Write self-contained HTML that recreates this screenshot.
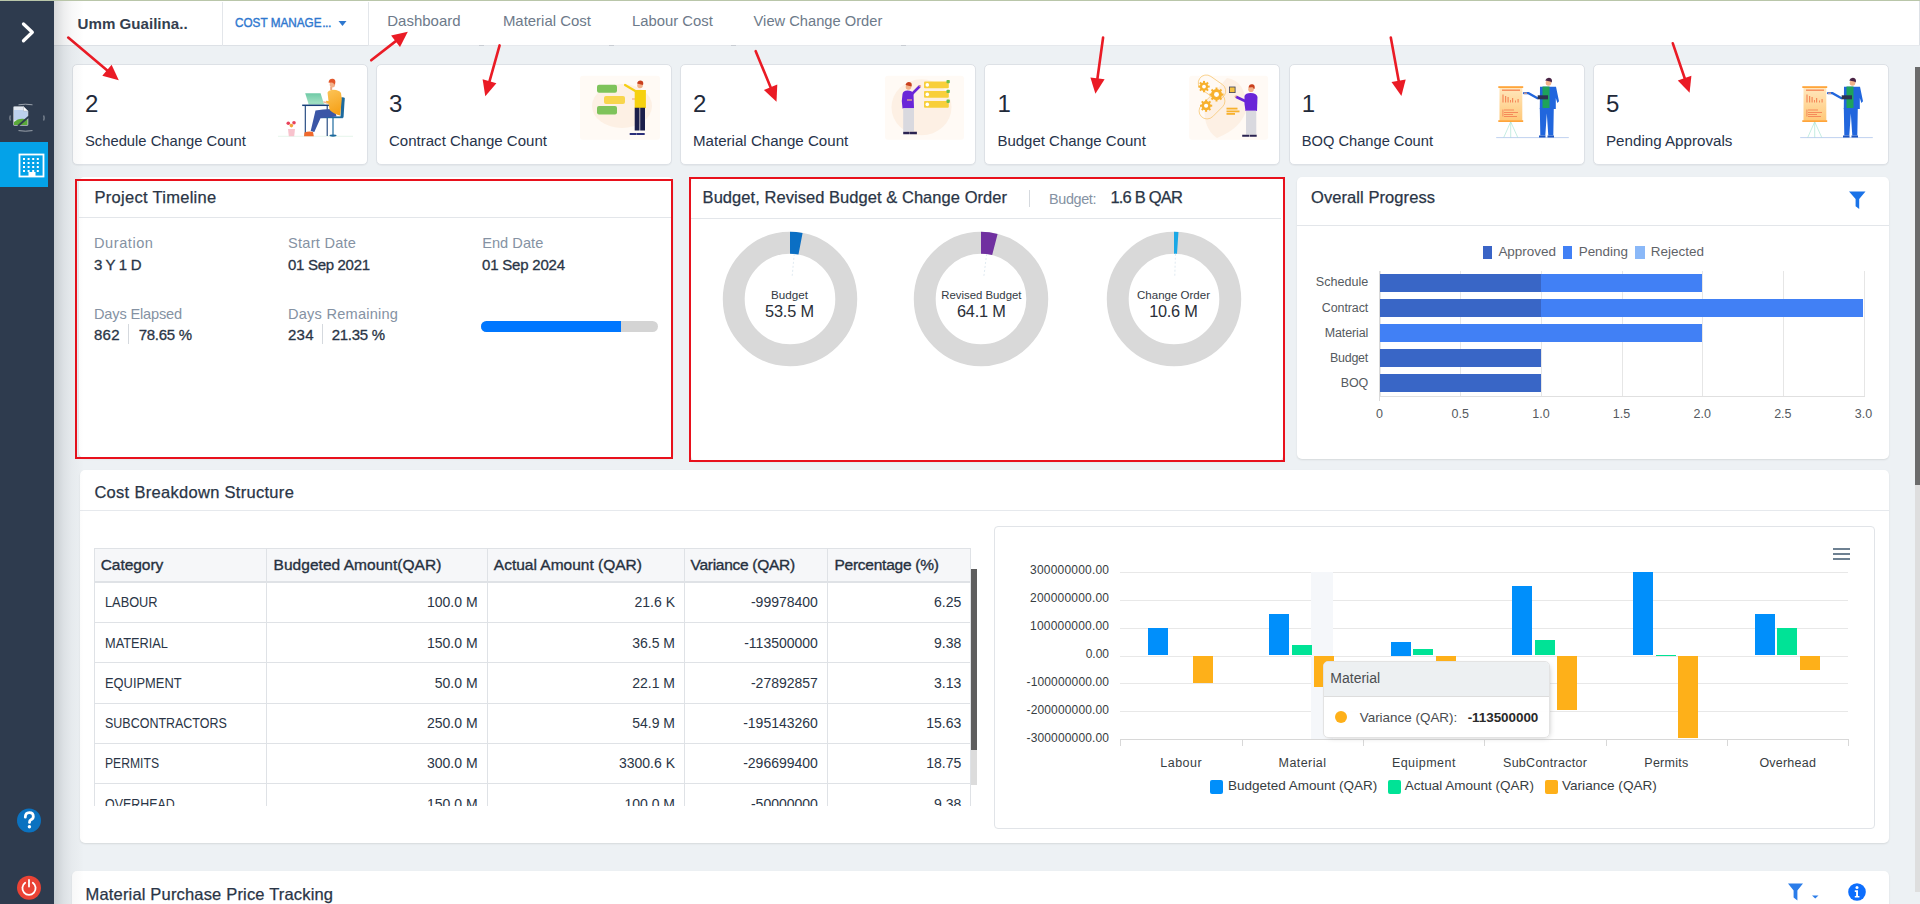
<!DOCTYPE html>
<html><head><meta charset="utf-8">
<style>
*{box-sizing:border-box;margin:0;padding:0}
html,body{width:1920px;height:904px;overflow:hidden}
body{font-family:"Liberation Sans",sans-serif;background:#edf1f4;color:#2a3546;position:relative}
.a{position:absolute}
.t{position:absolute;white-space:nowrap;line-height:1}
svg{position:absolute;overflow:visible}
</style></head><body>
<div class="a" style="left:54px;top:1px;width:1866px;height:45px;background:#fff;"></div>
<div class="a" style="left:54px;top:45px;width:314px;height:1px;background:#dde1e6;"></div>
<div class="a" style="left:368px;top:45px;width:1552px;height:1px;background:#e6e9ed;"></div>
<div class="a" style="left:222px;top:2px;width:1px;height:44px;background:#e3e6ea;"></div>
<div class="a" style="left:368px;top:2px;width:1px;height:44px;background:#e3e6ea;"></div>
<div class="a" style="left:479px;top:45px;width:5px;height:1px;background:#c9cdd3;"></div>
<div class="a" style="left:609px;top:45px;width:5px;height:1px;background:#c9cdd3;"></div>
<div class="a" style="left:731px;top:45px;width:5px;height:1px;background:#c9cdd3;"></div>
<div class="a" style="left:901px;top:45px;width:5px;height:1px;background:#c9cdd3;"></div>
<div class="a" style="left:72px;top:64px;width:296px;height:101px;background:#fff;border:1px solid #dde1e6;border-radius:5px;box-shadow:0 1px 1px rgba(0,0,0,0.04)"></div>
<div class="a" style="left:376px;top:64px;width:296px;height:101px;background:#fff;border:1px solid #dde1e6;border-radius:5px;box-shadow:0 1px 1px rgba(0,0,0,0.04)"></div>
<div class="a" style="left:680px;top:64px;width:296px;height:101px;background:#fff;border:1px solid #dde1e6;border-radius:5px;box-shadow:0 1px 1px rgba(0,0,0,0.04)"></div>
<div class="a" style="left:984.4px;top:64px;width:296px;height:101px;background:#fff;border:1px solid #dde1e6;border-radius:5px;box-shadow:0 1px 1px rgba(0,0,0,0.04)"></div>
<div class="a" style="left:1288.8px;top:64px;width:296px;height:101px;background:#fff;border:1px solid #dde1e6;border-radius:5px;box-shadow:0 1px 1px rgba(0,0,0,0.04)"></div>
<div class="a" style="left:1593px;top:64px;width:296px;height:101px;background:#fff;border:1px solid #dde1e6;border-radius:5px;box-shadow:0 1px 1px rgba(0,0,0,0.04)"></div>
<div class="a" style="left:79px;top:177px;width:594px;height:281px;background:#fff;border-radius:5px;box-shadow:0 1px 2px rgba(0,0,0,0.10);"></div>
<div class="a" style="left:691px;top:177px;width:592px;height:284px;background:#fff;border-radius:5px;box-shadow:0 1px 2px rgba(0,0,0,0.10);"></div>
<div class="a" style="left:1297px;top:177px;width:592px;height:282px;background:#fff;border-radius:5px;box-shadow:0 1px 2px rgba(0,0,0,0.10);"></div>
<div class="a" style="left:79px;top:217px;width:592px;height:1px;background:#e3e6ea;"></div>
<div class="a" style="left:691px;top:218px;width:590px;height:1px;background:#e3e6ea;"></div>
<div class="a" style="left:1297px;top:225px;width:592px;height:1px;background:#e3e6ea;"></div>
<div class="a" style="left:80px;top:470px;width:1809px;height:373px;background:#fff;border-radius:5px;box-shadow:0 1px 2px rgba(0,0,0,0.10);"></div>
<div class="a" style="left:80px;top:510px;width:1809px;height:1px;background:#e6e9ed;"></div>
<div class="a" style="left:994px;top:526px;width:881px;height:303px;border:1px solid #e1e4e8;border-radius:4px;background:#fff"></div>
<div class="a" style="left:72px;top:871px;width:1817px;height:60px;background:#fff;border-radius:5px;box-shadow:0 1px 2px rgba(0,0,0,0.10);"></div>
<div class="a" style="left:0px;top:0px;width:54px;height:904px;background:#2e3b4e;"></div>
<div class="a" style="left:0px;top:0px;width:1920px;height:1px;background:#b9c6a9;"></div>
<svg style="left:0;top:0" width="54" height="60"><polyline points="23.5,24 32.3,32.3 23.5,40.8" fill="none" stroke="#fff" stroke-width="3.3" stroke-linecap="round" stroke-linejoin="round"/></svg>
<svg style="left:8px;top:101px" width="40" height="34">
<g stroke="#c9ced4" stroke-width="0.7" fill="none">
<path d="M10.5,3.8 q7,-1.2 14,0"/><path d="M10.5,29.6 q7,1.2 14,0"/><path d="M2.2,19.5 q-0.6,-2.5 0,-5"/><path d="M35.8,14.5 q0.6,2.5 0,5"/>
</g>
<path d="M5.5,6.5 q0,-1 1,-1 h9 l4.5,4.5 v13.5 q0,1 -1,1 h-12.5 q-1,0 -1,-1z" fill="#e3e9f2" stroke="#a7adb5" stroke-width="0.7"/>
<path d="M6,9 h13.5 v10 h-13.5z" fill="#bcd0ec"/>
<path d="M6,24 v-3 q5,-5 13.5,-2.5 v5.5z" fill="#5aa83a"/>
<path d="M15.5,5.5 v4.5 h4.5z" fill="#fff" stroke="#a7adb5" stroke-width="0.5"/>
<path d="M10,25 l11,-9.5" stroke="#2e3b4e" stroke-width="1.8"/>
</svg>
<div class="a" style="left:0px;top:142px;width:48px;height:45px;background:#04a2e8;"></div>
<svg style="left:17px;top:152px" width="30" height="28">
<rect x="2.5" y="2.5" width="24" height="22" fill="none" stroke="#fff" stroke-width="1.8"/>
<g fill="#fff"><rect x="6.0" y="6.0" width="2" height="2"/><rect x="6.0" y="10.0" width="2" height="2"/><rect x="6.0" y="14.0" width="2" height="2"/><rect x="6.0" y="18.0" width="2" height="2"/><rect x="10.6" y="6.0" width="2" height="2"/><rect x="10.6" y="10.0" width="2" height="2"/><rect x="10.6" y="14.0" width="2" height="2"/><rect x="10.6" y="18.0" width="2" height="2"/><rect x="15.2" y="6.0" width="2" height="2"/><rect x="15.2" y="10.0" width="2" height="2"/><rect x="15.2" y="14.0" width="2" height="2"/><rect x="15.2" y="18.0" width="2" height="2"/><rect x="19.8" y="6.0" width="2" height="2"/><rect x="19.8" y="10.0" width="2" height="2"/><rect x="19.8" y="14.0" width="2" height="2"/><rect x="19.8" y="18.0" width="2" height="2"/>
<rect x="11.5" y="20" width="7" height="5"/></g></svg>
<svg style="left:15px;top:806px" width="30" height="30"><circle cx="14" cy="14.5" r="12" fill="#0b72c0"/>
<path d="M10.3,11.2 q0,-4.6 4,-4.6 q4,0 4,3.8 q0,2.3 -2.4,3.4 q-1.4,0.7 -1.4,2.6" fill="none" stroke="#fff" stroke-width="2.8" stroke-linecap="round"/>
<circle cx="14.4" cy="20.8" r="1.7" fill="#fff"/></svg>
<svg style="left:15px;top:873px" width="30" height="30"><circle cx="14" cy="14.7" r="12" fill="#ea4335"/>
<path d="M10.2,9.8 a6.6,6.6 0 1 0 7.6,0" fill="none" stroke="#fff" stroke-width="1.8" stroke-linecap="round"/>
<path d="M14,7 v6.6" stroke="#fff" stroke-width="1.8" stroke-linecap="round"/></svg>
<div class="t" style="left:77.60px;top:15.00px;font-size:15.11px;line-height:17px;color:#34404f;font-weight:bold;">Umm Guailina..</div>
<div class="t" style="left:234.60px;top:16.00px;font-size:12.60px;line-height:14px;color:#2f78cf;transform:scaleX(0.9313);transform-origin:left top;-webkit-text-stroke:0.4px #2f78cf;">COST MANAGE</div>
<div class="t" style="left:322.30px;top:16.00px;font-size:12.30px;line-height:14px;color:#2f78cf;letter-spacing:-0.626px;-webkit-text-stroke:0.4px #2f78cf;">...</div>
<svg style="left:338px;top:20px" width="10" height="8"><path d="M0.5,1 h8 l-4,5z" fill="#2f78cf"/></svg>
<div class="t" style="left:387.30px;top:12.00px;font-size:14.98px;line-height:17px;color:#6d7a8a;">Dashboard</div>
<div class="t" style="left:502.90px;top:12.00px;font-size:14.94px;line-height:17px;color:#6d7a8a;">Material Cost</div>
<div class="t" style="left:632.00px;top:13.00px;font-size:14.83px;line-height:16px;color:#6d7a8a;">Labour Cost</div>
<div class="t" style="left:753.60px;top:13.00px;font-size:14.70px;line-height:16px;color:#6d7a8a;">View Change Order</div>
<div class="t" style="left:85.00px;top:90.00px;font-size:24.00px;line-height:27px;color:#1f2a3a;">2</div>
<div class="t" style="left:85.00px;top:133.00px;font-size:14.78px;line-height:16px;color:#27334a;">Schedule Change Count</div>
<div class="t" style="left:389.00px;top:90.00px;font-size:24.00px;line-height:27px;color:#1f2a3a;">3</div>
<div class="t" style="left:389.00px;top:132.00px;font-size:15.04px;line-height:17px;color:#27334a;">Contract Change Count</div>
<div class="t" style="left:693.00px;top:90.00px;font-size:24.00px;line-height:27px;color:#1f2a3a;">2</div>
<div class="t" style="left:693.00px;top:132.00px;font-size:15.10px;line-height:17px;color:#27334a;">Material Change Count</div>
<div class="t" style="left:997.40px;top:90.00px;font-size:24.00px;line-height:27px;color:#1f2a3a;">1</div>
<div class="t" style="left:997.40px;top:132.00px;font-size:15.01px;line-height:17px;color:#27334a;">Budget Change Count</div>
<div class="t" style="left:1301.80px;top:90.00px;font-size:24.00px;line-height:27px;color:#1f2a3a;">1</div>
<div class="t" style="left:1301.80px;top:133.00px;font-size:14.66px;line-height:16px;color:#27334a;">BOQ Change Count</div>
<div class="t" style="left:1606.00px;top:90.00px;font-size:24.00px;line-height:27px;color:#1f2a3a;">5</div>
<div class="t" style="left:1606.00px;top:132.00px;font-size:15.17px;line-height:17px;color:#27334a;">Pending Approvals</div>
<svg style="left:270px;top:70px" width="90" height="75">
<defs><linearGradient id="shirt1" x1="0" y1="0" x2="0.3" y2="1"><stop offset="0" stop-color="#fcc55a"/><stop offset="1" stop-color="#f6a21a"/></linearGradient>
<linearGradient id="lap1" x1="0" y1="0" x2="0" y2="1"><stop offset="0" stop-color="#6fcaa6"/><stop offset="1" stop-color="#a6e2c6"/></linearGradient></defs>
<path d="M8,66.3 H83" stroke="#dff2e6" stroke-width="0.8"/>
<path d="M18,59 h7 l-0.8,7.3 h-5.4z" fill="#f8c3cd"/>
<circle cx="18.3" cy="53.2" r="1.8" fill="#e8405a"/><circle cx="24" cy="52.8" r="1.8" fill="#e8405a"/><circle cx="21.4" cy="55.6" r="1.8" fill="#f2a13a"/>
<path d="M35.2,23.2 h15.4 l3.3,10.8 h-15.3z" fill="url(#lap1)"/>
<path d="M38.6,34 h16" stroke="#8fd9b8" stroke-width="1"/>
<path d="M32.2,35.3 h27.5" stroke="#173f7a" stroke-width="1.5"/>
<path d="M35.3,36 v30 M57.2,36 v30" stroke="#173f7a" stroke-width="1.1"/>
<path d="M71,27.5 q2.5,-0.5 3.8,0.5 l-1.3,19.5 h-3z" fill="#1d6a9e"/>
<path d="M51.4,46.4 h21.5 v1.8 h-21.5z" fill="#1d6a9e"/>
<path d="M63,48 v17.5" stroke="#1d6a9e" stroke-width="1.2"/>
<ellipse cx="63" cy="65.6" rx="3.5" ry="1.1" fill="#1d6a9e"/>
<path d="M45.5,40.5 q8,-1.8 19,-1.5 l2,7.4 l-16,1.8 l-6.2,13.8 l-3.6,-1z" fill="#3b56a6"/>
<path d="M34.5,62.4 q4,-1.5 8.5,-0.5 l0.8,4.4 h-9.8z" fill="#f06a2c"/>
<path d="M57.5,22.5 q1.5,-2.8 6,-2.8 q5.5,0.2 7.5,3.2 l0.8,6 l-1.6,16.6 q-6,-1.2 -10.5,-5.5 l-1.2,-6.3 l-2.8,-0.5 l0.3,-2.5 l2.5,0.2z" fill="url(#shirt1)"/>
<path d="M53.8,32 l2.6,0.6" stroke="#f0b190" stroke-width="1.3" stroke-linecap="round"/>
<path d="M61.2,17 v3" stroke="#eaa580" stroke-width="2"/>
<ellipse cx="62.4" cy="14.2" rx="2.7" ry="3.2" fill="#f2b08a"/>
<path d="M58.6,12.8 q0,-4.3 4.4,-4 q2.8,0.3 2.3,4.4 l-1.1,1.5 q-0.5,-2.2 -2.5,-2.2 q-1.5,0 -3.1,0.3z" fill="#e2562a"/>
</svg>
<svg style="left:575px;top:70px" width="90" height="75">
<rect x="5" y="5.8" width="80" height="64" rx="3" fill="#fffaf5"/>
<ellipse cx="47" cy="36" rx="30" ry="22" fill="#fdf0e4"/>
<rect x="22" y="14.8" width="20" height="8" rx="2" fill="#7ec35b"/>
<rect x="29" y="25.9" width="21" height="8.1" rx="2" fill="#f8d54c"/>
<rect x="22" y="36" width="20" height="8.4" rx="2" fill="#7ec35b"/>
<path d="M50,15 l12,7" stroke="#f5ce12" stroke-width="2.2" stroke-linecap="round"/>
<path d="M57,29 h6" stroke="#f2b28a" stroke-width="1.3"/>
<path d="M59.7,20 h11.2 v18.1 h-11.2z" fill="#f6d10f"/>
<path d="M59.7,37.7 h4.8 v22.8 h-4.8z M65.2,37.7 h4.8 v22.8 h-4.8z" fill="#1b1f4b"/>
<path d="M54.7,63 h7 v2 h-7z M62,63 h7.7 v2 h-7.7z" fill="#2b2f7a"/>
<circle cx="65" cy="15.5" r="2.8" fill="#f2b28a"/>
<path d="M62,13.5 q1,-3.5 4.5,-2.8 q2.5,0.8 1.5,4.2z" fill="#c9401e"/>
</svg>
<svg style="left:880px;top:70px" width="90" height="75">
<rect x="5" y="5.8" width="79" height="64" rx="3" fill="#fffaf5"/>
<ellipse cx="41.5" cy="37.3" rx="30" ry="28" fill="#fdf0e4"/>
<g fill="#f8cf3a"><rect x="44" y="11.6" width="24.8" height="6.6" rx="1"/><rect x="44" y="21.1" width="24.8" height="6.7" rx="1"/><rect x="44" y="31.1" width="24.8" height="6.6" rx="1"/></g>
<g fill="#fff"><circle cx="47.3" cy="14.9" r="1.8"/><circle cx="47.3" cy="24.4" r="1.8"/><circle cx="47.3" cy="34.4" r="1.8"/></g>
<g fill="#6cbf4d"><rect x="66.5" y="10" width="3.3" height="3.3" rx="0.8"/><rect x="66.5" y="19.8" width="3.3" height="3.3" rx="0.8"/><rect x="66.5" y="29.6" width="3.3" height="3.3" rx="0.8"/></g>
<path d="M32,24 l7.5,-7.5" stroke="#6a25d8" stroke-width="2.6" stroke-linecap="round"/><circle cx="40.2" cy="16" r="1" fill="#f2b28a"/>
<path d="M22.5,24 q0.5,-3.5 5,-3.6 q4.5,0 6,3 l0.5,15.2 h-11.5 q-1.5,-7 0,-14.6z" fill="#6a25d8"/><path d="M27,30 h5" stroke="#f2b28a" stroke-width="1.2"/>
<path d="M23.2,38.1 h10.8 v23.3 h-10.8z" fill="#d9d9df"/>
<path d="M23.2,61.8 h6 v2.5 h-6z M29.5,61.8 h7.4 v2.5 h-7.4z" fill="#2a2250"/>
<circle cx="28.5" cy="17" r="2.8" fill="#f2b28a"/>
<path d="M25.5,15 q1,-3.5 4.5,-2.8 q2.5,0.8 1.5,4.2z" fill="#c9401e"/>
</svg>
<svg style="left:1185px;top:70px" width="90" height="75">
<rect x="4.1" y="5.8" width="79" height="64" rx="3" fill="#fffaf5"/>
<path d="M42,8 q18,2 20,30 q-5,20 -30,30 q-15,-10 -12,-35z" fill="#fdf0e4"/>
<g fill="none" stroke="#f7c46a" stroke-width="0.7"><rect x="12" y="9" width="30" height="16" rx="8" transform="rotate(35 27 17)"/><rect x="12" y="28" width="30" height="16" rx="8" transform="rotate(-45 27 36)"/></g>
<circle cx="19" cy="16.6" r="4.2" fill="#f7b12e"/><rect x="18.00" y="10.90" width="2" height="3" fill="#f7b12e" transform="rotate(0 19 16.6)"/><rect x="18.00" y="10.90" width="2" height="3" fill="#f7b12e" transform="rotate(45 19 16.6)"/><rect x="18.00" y="10.90" width="2" height="3" fill="#f7b12e" transform="rotate(90 19 16.6)"/><rect x="18.00" y="10.90" width="2" height="3" fill="#f7b12e" transform="rotate(135 19 16.6)"/><rect x="18.00" y="10.90" width="2" height="3" fill="#f7b12e" transform="rotate(180 19 16.6)"/><rect x="18.00" y="10.90" width="2" height="3" fill="#f7b12e" transform="rotate(225 19 16.6)"/><rect x="18.00" y="10.90" width="2" height="3" fill="#f7b12e" transform="rotate(270 19 16.6)"/><rect x="18.00" y="10.90" width="2" height="3" fill="#f7b12e" transform="rotate(315 19 16.6)"/><circle cx="19" cy="16.6" r="1.89" fill="#fff"/><circle cx="31.5" cy="24.5" r="5.5" fill="#f7b12e"/><rect x="30.50" y="17.50" width="2" height="3" fill="#f7b12e" transform="rotate(0 31.5 24.5)"/><rect x="30.50" y="17.50" width="2" height="3" fill="#f7b12e" transform="rotate(45 31.5 24.5)"/><rect x="30.50" y="17.50" width="2" height="3" fill="#f7b12e" transform="rotate(90 31.5 24.5)"/><rect x="30.50" y="17.50" width="2" height="3" fill="#f7b12e" transform="rotate(135 31.5 24.5)"/><rect x="30.50" y="17.50" width="2" height="3" fill="#f7b12e" transform="rotate(180 31.5 24.5)"/><rect x="30.50" y="17.50" width="2" height="3" fill="#f7b12e" transform="rotate(225 31.5 24.5)"/><rect x="30.50" y="17.50" width="2" height="3" fill="#f7b12e" transform="rotate(270 31.5 24.5)"/><rect x="30.50" y="17.50" width="2" height="3" fill="#f7b12e" transform="rotate(315 31.5 24.5)"/><circle cx="31.5" cy="24.5" r="2.48" fill="#fff"/><circle cx="21.1" cy="35.7" r="4.6" fill="#f7b12e"/><rect x="20.10" y="29.60" width="2" height="3" fill="#f7b12e" transform="rotate(0 21.1 35.7)"/><rect x="20.10" y="29.60" width="2" height="3" fill="#f7b12e" transform="rotate(45 21.1 35.7)"/><rect x="20.10" y="29.60" width="2" height="3" fill="#f7b12e" transform="rotate(90 21.1 35.7)"/><rect x="20.10" y="29.60" width="2" height="3" fill="#f7b12e" transform="rotate(135 21.1 35.7)"/><rect x="20.10" y="29.60" width="2" height="3" fill="#f7b12e" transform="rotate(180 21.1 35.7)"/><rect x="20.10" y="29.60" width="2" height="3" fill="#f7b12e" transform="rotate(225 21.1 35.7)"/><rect x="20.10" y="29.60" width="2" height="3" fill="#f7b12e" transform="rotate(270 21.1 35.7)"/><rect x="20.10" y="29.60" width="2" height="3" fill="#f7b12e" transform="rotate(315 21.1 35.7)"/><circle cx="21.1" cy="35.7" r="2.07" fill="#fff"/>
<rect x="44.5" y="17" width="5.6" height="5.6" fill="#f6c343" stroke="#3a3f5c" stroke-width="0.8"/>
<g fill="#f7b12e"><rect x="41.5" y="37.7" width="11" height="1.8"/><rect x="41.5" y="40.5" width="13" height="1.8"/><rect x="41.5" y="43" width="8.5" height="1.8"/></g>
<path d="M51.5,27 l9.5,4.5" stroke="#6a25d8" stroke-width="2.6" stroke-linecap="round"/><circle cx="50.5" cy="26.5" r="1" fill="#f2b28a"/>
<path d="M59.5,26 q1,-3 6,-3 q6,0 7,4 l-0.5,14 h-11.5 q-1.5,-7 -1,-15z" fill="#6a25d8"/>
<path d="M61,40.6 h10.3 v24.1 h-10.3z" fill="#d9d9df"/>
<path d="M57.2,64.7 h7 v2.1 h-7z M64.7,64.7 h7 v2.1 h-7z" fill="#2a2250"/>
<circle cx="66" cy="19.3" r="2.8" fill="#f2b28a"/>
<path d="M63.5,17.5 q0.5,-3.8 4,-3.3 q3,0.5 2,4.8 l-1.2,-0.5 q0,-1.5 -1.5,-1.2z" fill="#c9401e"/>
</svg>
<svg style="left:1490px;top:70px" width="90" height="75"><defs><linearGradient id="brd" x1="0" y1="0" x2="0" y2="1"><stop offset="0" stop-color="#ffe7bd"/><stop offset="1" stop-color="#ffc878"/></linearGradient></defs>
<path d="M6.2,67.6 H78.8" stroke="#b9cdee" stroke-width="0.9"/>
<path d="M20.7,51.8 L13.7,67.6 M20.7,51.8 L27.8,67.6 M20.7,51.8 V67.6" stroke="#9fe0cf" stroke-width="0.6"/>
<rect x="9.5" y="17.8" width="22.8" height="32.8" fill="url(#brd)"/>
<rect x="8.3" y="16.2" width="24.9" height="1.8" fill="#ffa53a"/>
<rect x="8.3" y="50.2" width="24.9" height="1.8" fill="#ffa53a"/>
<rect x="12" y="19.5" width="18" height="1.4" fill="#f58a5a"/>
<g fill="#f58a5a"><rect x="12.4" y="24.5" width="1.2" height="8"/><rect x="15" y="26" width="1.2" height="6.5"/><rect x="17.5" y="27" width="1.2" height="5.5"/><rect x="20" y="30" width="1" height="2.5"/><rect x="22" y="28" width="1.2" height="4.5"/><rect x="25" y="30.5" width="1" height="2"/><rect x="27.5" y="29" width="1.2" height="3.5"/>
<rect x="12.4" y="39.5" width="1" height="7"/><rect x="14" y="39.5" width="10" height="1"/><rect x="14" y="42" width="14" height="1"/><rect x="14" y="44" width="9" height="1"/><rect x="14" y="46" width="13" height="1"/></g>
<path d="M34,23.2 h4.5 l9,5" stroke="#2166dd" stroke-width="2.2" stroke-linecap="round" fill="none"/>
<path d="M34,23.2 h3" stroke="#f2a07a" stroke-width="1.2"/>
<path d="M50,16.8 h16 l3,14.5 l-1.6,1.6 l-1.6,-5 v11 h-16z" fill="#2166dd"/>
<path d="M52.5,16.5 h7 v21.5 h-7z" fill="#1ea35a"/>
<rect x="47.7" y="25.3" width="10.3" height="4" fill="#2d3350"/>
<path d="M49.8,38.1 h14 l-0.5,27.4 h-5 l-1.5,-22 l-1.5,22 h-5z" fill="#2166dd"/>
<path d="M49,65.5 h6.5 v2 h-6.5z M57.5,65.5 h6.5 v2 h-6.5z" fill="#1d54c0"/>
<circle cx="58.5" cy="13" r="2.8" fill="#f2b28a"/>
<path d="M55.2,10.5 q1.5,-3.5 5,-2.5 q2.5,1 1.5,4.5 l-1.5,-1z" fill="#4a2345"/></svg>
<svg style="left:1794px;top:70px" width="90" height="75"><defs><linearGradient id="brd2" x1="0" y1="0" x2="0" y2="1"><stop offset="0" stop-color="#ffe7bd"/><stop offset="1" stop-color="#ffc878"/></linearGradient></defs>
<path d="M6.2,67.6 H78.8" stroke="#b9cdee" stroke-width="0.9"/>
<path d="M20.7,51.8 L13.7,67.6 M20.7,51.8 L27.8,67.6 M20.7,51.8 V67.6" stroke="#9fe0cf" stroke-width="0.6"/>
<rect x="9.5" y="17.8" width="22.8" height="32.8" fill="url(#brd2)"/>
<rect x="8.3" y="16.2" width="24.9" height="1.8" fill="#ffa53a"/>
<rect x="8.3" y="50.2" width="24.9" height="1.8" fill="#ffa53a"/>
<rect x="12" y="19.5" width="18" height="1.4" fill="#f58a5a"/>
<g fill="#f58a5a"><rect x="12.4" y="24.5" width="1.2" height="8"/><rect x="15" y="26" width="1.2" height="6.5"/><rect x="17.5" y="27" width="1.2" height="5.5"/><rect x="20" y="30" width="1" height="2.5"/><rect x="22" y="28" width="1.2" height="4.5"/><rect x="25" y="30.5" width="1" height="2"/><rect x="27.5" y="29" width="1.2" height="3.5"/>
<rect x="12.4" y="39.5" width="1" height="7"/><rect x="14" y="39.5" width="10" height="1"/><rect x="14" y="42" width="14" height="1"/><rect x="14" y="44" width="9" height="1"/><rect x="14" y="46" width="13" height="1"/></g>
<path d="M34,23.2 h4.5 l9,5" stroke="#2166dd" stroke-width="2.2" stroke-linecap="round" fill="none"/>
<path d="M34,23.2 h3" stroke="#f2a07a" stroke-width="1.2"/>
<path d="M50,16.8 h16 l3,14.5 l-1.6,1.6 l-1.6,-5 v11 h-16z" fill="#2166dd"/>
<path d="M52.5,16.5 h7 v21.5 h-7z" fill="#1ea35a"/>
<rect x="47.7" y="25.3" width="10.3" height="4" fill="#2d3350"/>
<path d="M49.8,38.1 h14 l-0.5,27.4 h-5 l-1.5,-22 l-1.5,22 h-5z" fill="#2166dd"/>
<path d="M49,65.5 h6.5 v2 h-6.5z M57.5,65.5 h6.5 v2 h-6.5z" fill="#1d54c0"/>
<circle cx="58.5" cy="13" r="2.8" fill="#f2b28a"/>
<path d="M55.2,10.5 q1.5,-3.5 5,-2.5 q2.5,1 1.5,4.5 l-1.5,-1z" fill="#4a2345"/></svg>
<div class="t" style="left:94.50px;top:188.00px;font-size:16.50px;line-height:18px;color:#2a3546;letter-spacing:0.289px;-webkit-text-stroke:0.25px #2a3546;">Project Timeline</div>
<div class="t" style="left:94.00px;top:235.00px;font-size:14.60px;line-height:16px;color:#8592a3;letter-spacing:0.546px;">Duration</div>
<div class="t" style="left:94.00px;top:256.00px;font-size:15.00px;line-height:17px;color:#2a3546;letter-spacing:-0.330px;-webkit-text-stroke:0.3px #2a3546;">3 Y 1 D</div>
<div class="t" style="left:288.00px;top:235.00px;font-size:14.60px;line-height:16px;color:#8592a3;letter-spacing:0.253px;">Start Date</div>
<div class="t" style="left:288.00px;top:256.00px;font-size:15.00px;line-height:17px;color:#2a3546;letter-spacing:-0.307px;-webkit-text-stroke:0.3px #2a3546;">01 Sep 2021</div>
<div class="t" style="left:482.20px;top:235.00px;font-size:14.60px;line-height:16px;color:#8592a3;letter-spacing:0.033px;">End Date</div>
<div class="t" style="left:482.00px;top:256.00px;font-size:15.00px;line-height:17px;color:#2a3546;letter-spacing:-0.197px;-webkit-text-stroke:0.3px #2a3546;">01 Sep 2024</div>
<div class="t" style="left:94.00px;top:306.00px;font-size:14.60px;line-height:16px;color:#8592a3;letter-spacing:-0.171px;">Days Elapsed</div>
<div class="t" style="left:94.00px;top:326.00px;font-size:15.00px;line-height:17px;color:#2a3546;letter-spacing:0.238px;-webkit-text-stroke:0.3px #2a3546;">862</div>
<div class="a" style="left:128px;top:324px;width:1px;height:20px;background:#d5d9de;"></div>
<div class="t" style="left:138.70px;top:326.00px;font-size:15.00px;line-height:17px;color:#2a3546;letter-spacing:-0.256px;-webkit-text-stroke:0.3px #2a3546;">78.65 %</div>
<div class="t" style="left:288.00px;top:306.00px;font-size:14.60px;line-height:16px;color:#8592a3;letter-spacing:0.223px;">Days Remaining</div>
<div class="t" style="left:288.00px;top:326.00px;font-size:15.00px;line-height:17px;color:#2a3546;letter-spacing:0.238px;-webkit-text-stroke:0.3px #2a3546;">234</div>
<div class="a" style="left:322px;top:324px;width:1px;height:20px;background:#d5d9de;"></div>
<div class="t" style="left:331.70px;top:326.00px;font-size:15.00px;line-height:17px;color:#2a3546;letter-spacing:-0.256px;-webkit-text-stroke:0.3px #2a3546;">21.35 %</div>
<div class="a" style="left:481px;top:321px;width:177px;height:11px;border-radius:6px;background:#d4d4d4;overflow:hidden"><div style="width:140px;height:11px;background:#0077ff"></div></div>
<div class="t" style="left:702.60px;top:188.00px;font-size:16.50px;line-height:18px;color:#2a3546;letter-spacing:0.048px;-webkit-text-stroke:0.25px #2a3546;">Budget, Revised Budget &amp; Change Order</div>
<div class="a" style="left:1029px;top:190px;width:1px;height:17px;background:#d5d9de;"></div>
<div class="t" style="left:1049.00px;top:191.00px;font-size:14.40px;line-height:16px;color:#8592a3;letter-spacing:-0.356px;">Budget:</div>
<div class="t" style="left:1110.50px;top:188.00px;font-size:16.50px;line-height:18px;color:#2a3546;letter-spacing:-0.821px;-webkit-text-stroke:0.25px #2a3546;">1.6 B QAR</div>
<svg style="left:719.5px;top:229.39999999999998px" width="140" height="140"><circle cx="70" cy="70" r="56.25" fill="none" stroke="#d9d9d9" stroke-width="21.900000000000006"/>
<path d="M70,2.799999999999997 A67.2,67.2 0 0 1 82.59,3.99 L78.49,25.50 A45.3,45.3 0 0 0 70,24.700000000000003z" fill="#0b6fc4"/>
<path d="M74.26,24.90 L72.07,48.10" stroke="#d8e4ee" stroke-width="0.8" stroke-dasharray="2,2"/></svg>
<div class="t" style="left:771.00px;top:288.00px;font-size:11.67px;line-height:13px;color:#333a44;">Budget</div>
<div class="t" style="left:765.00px;top:302.00px;font-size:16.32px;line-height:18px;color:#2a2f38;letter-spacing:-0.178px;">53.5 M</div>
<svg style="left:911.4px;top:229.39999999999998px" width="140" height="140"><circle cx="70" cy="70" r="56.25" fill="none" stroke="#d9d9d9" stroke-width="21.900000000000006"/>
<path d="M70,2.799999999999997 A67.2,67.2 0 0 1 86.60,4.88 L81.19,26.10 A45.3,45.3 0 0 0 70,24.700000000000003z" fill="#7030a0"/>
<path d="M75.64,25.05 L72.74,48.17" stroke="#d8e4ee" stroke-width="0.8" stroke-dasharray="2,2"/></svg>
<div class="t" style="left:941.25px;top:289.00px;font-size:11.37px;line-height:12px;color:#333a44;">Revised Budget</div>
<div class="t" style="left:956.90px;top:302.00px;font-size:16.32px;line-height:18px;color:#2a2f38;letter-spacing:-0.178px;">64.1 M</div>
<svg style="left:1103.5px;top:229.39999999999998px" width="140" height="140"><circle cx="70" cy="70" r="56.25" fill="none" stroke="#d9d9d9" stroke-width="21.900000000000006"/>
<path d="M70,2.799999999999997 A67.2,67.2 0 0 1 74.45,2.95 L73.00,24.80 A45.3,45.3 0 0 0 70,24.700000000000003z" fill="#1aa8e6"/>
<path d="M71.50,24.72 L70.73,48.01" stroke="#d8e4ee" stroke-width="0.8" stroke-dasharray="2,2"/></svg>
<div class="t" style="left:1137.00px;top:289.00px;font-size:11.52px;line-height:12px;color:#333a44;">Change Order</div>
<div class="t" style="left:1149.15px;top:302.00px;font-size:16.32px;line-height:18px;color:#2a2f38;letter-spacing:-0.238px;">10.6 M</div>
<div class="t" style="left:1311.00px;top:188.00px;font-size:16.50px;line-height:18px;color:#2a3546;letter-spacing:0.076px;-webkit-text-stroke:0.25px #2a3546;">Overall Progress</div>
<svg style="left:1847px;top:190px" width="22" height="20"><path d="M2,1.5 h16.5 l-6.3,7.5 v10 l-3.6,-2.8 v-7.2z" fill="#1a73e8"/></svg>
<div class="a" style="left:1482.5px;top:245.7px;width:9.5px;height:13.3px;background:#3a64c6;"></div>
<div class="t" style="left:1498.40px;top:244.00px;font-size:13.46px;line-height:15px;color:#5f6368;">Approved</div>
<div class="a" style="left:1562.8px;top:245.7px;width:9.5px;height:13.3px;background:#4180f5;"></div>
<div class="t" style="left:1578.70px;top:244.00px;font-size:13.44px;line-height:15px;color:#5f6368;">Pending</div>
<div class="a" style="left:1635px;top:245.7px;width:9.5px;height:13.3px;background:#8ab8f8;"></div>
<div class="t" style="left:1650.80px;top:244.00px;font-size:13.48px;line-height:15px;color:#5f6368;">Rejected</div>
<div class="a" style="left:1380px;top:270.6px;width:1px;height:125.09999999999997px;background:#e6e6e6;"></div>
<div class="a" style="left:1460px;top:270.6px;width:1px;height:125.09999999999997px;background:#e6e6e6;"></div>
<div class="a" style="left:1541px;top:270.6px;width:1px;height:125.09999999999997px;background:#e6e6e6;"></div>
<div class="a" style="left:1622px;top:270.6px;width:1px;height:125.09999999999997px;background:#e6e6e6;"></div>
<div class="a" style="left:1702px;top:270.6px;width:1px;height:125.09999999999997px;background:#e6e6e6;"></div>
<div class="a" style="left:1783px;top:270.6px;width:1px;height:125.09999999999997px;background:#e6e6e6;"></div>
<div class="a" style="left:1864px;top:270.6px;width:1px;height:125.09999999999997px;background:#e6e6e6;"></div>
<div class="a" style="left:1379px;top:395.7px;width:486px;height:1px;background:#e0e0e0;"></div>
<div class="a" style="left:1379px;top:270.6px;width:1px;height:130.09999999999997px;background:#dadada;"></div>
<div class="a" style="left:1380px;top:273.9px;width:161.3px;height:17.8px;background:#3966c6;"></div>
<div class="a" style="left:1540.9px;top:273.9px;width:161.3px;height:17.8px;background:#4180f5;"></div>
<div class="t" style="left:1315.80px;top:275.00px;font-size:12.59px;line-height:14px;color:#555a60;">Schedule</div>
<div class="a" style="left:1380px;top:299.0px;width:161.3px;height:17.8px;background:#3966c6;"></div>
<div class="a" style="left:1540.9px;top:299.0px;width:322.6px;height:17.8px;background:#4180f5;"></div>
<div class="t" style="left:1321.80px;top:301.00px;font-size:12.48px;line-height:14px;color:#555a60;letter-spacing:-0.095px;">Contract</div>
<div class="a" style="left:1379.6px;top:324.1px;width:322.6px;height:17.8px;background:#4180f5;"></div>
<div class="t" style="left:1324.80px;top:326.00px;font-size:12.48px;line-height:14px;color:#555a60;letter-spacing:-0.126px;">Material</div>
<div class="a" style="left:1380px;top:349.3px;width:161.3px;height:17.8px;background:#3966c6;"></div>
<div class="t" style="left:1330.00px;top:351.00px;font-size:12.48px;line-height:14px;color:#555a60;letter-spacing:-0.250px;">Budget</div>
<div class="a" style="left:1380px;top:374.4px;width:161.3px;height:17.8px;background:#3966c6;"></div>
<div class="t" style="left:1340.80px;top:376.00px;font-size:12.48px;line-height:14px;color:#555a60;letter-spacing:-0.119px;">BOQ</div>
<div class="t" style="left:1376.12px;top:407.00px;font-size:12.50px;line-height:14px;color:#555a60;">0</div>
<div class="t" style="left:1451.56px;top:407.00px;font-size:12.50px;line-height:14px;color:#555a60;">0.5</div>
<div class="t" style="left:1532.21px;top:407.00px;font-size:12.50px;line-height:14px;color:#555a60;">1.0</div>
<div class="t" style="left:1612.86px;top:407.00px;font-size:12.50px;line-height:14px;color:#555a60;">1.5</div>
<div class="t" style="left:1693.51px;top:407.00px;font-size:12.50px;line-height:14px;color:#555a60;">2.0</div>
<div class="t" style="left:1774.16px;top:407.00px;font-size:12.50px;line-height:14px;color:#555a60;">2.5</div>
<div class="t" style="left:1854.81px;top:407.00px;font-size:12.50px;line-height:14px;color:#555a60;">3.0</div>
<div class="t" style="left:94.40px;top:483.00px;font-size:16.50px;line-height:18px;color:#2a3546;letter-spacing:0.297px;-webkit-text-stroke:0.25px #2a3546;">Cost Breakdown Structure</div>
<div class="a" style="left:94px;top:548px;width:877px;height:258px;overflow:hidden">
<div class="a" style="left:0;top:0;width:877px;height:34px;background:#f6f7f9;border:1px solid #dfe2e6"></div>
<div class="a" style="left:0.0px;top:0;width:1px;height:260px;background:#dfe2e6"></div>
<div class="a" style="left:172.1px;top:0;width:1px;height:260px;background:#dfe2e6"></div>
<div class="a" style="left:392.9px;top:0;width:1px;height:260px;background:#dfe2e6"></div>
<div class="a" style="left:589.5px;top:0;width:1px;height:260px;background:#dfe2e6"></div>
<div class="a" style="left:732.9px;top:0;width:1px;height:260px;background:#dfe2e6"></div>
<div class="a" style="left:875.7px;top:0;width:1px;height:260px;background:#dfe2e6"></div>
<div class="a" style="left:0;top:34.3px;width:877px;height:1px;background:#dfe2e6"></div>
<div class="a" style="left:0;top:74.2px;width:877px;height:1px;background:#dfe2e6"></div>
<div class="a" style="left:0;top:114.4px;width:877px;height:1px;background:#dfe2e6"></div>
<div class="a" style="left:0;top:155.1px;width:877px;height:1px;background:#dfe2e6"></div>
<div class="a" style="left:0;top:195.4px;width:877px;height:1px;background:#dfe2e6"></div>
<div class="a" style="left:0;top:235.2px;width:877px;height:1px;background:#dfe2e6"></div>
<div class="a" style="left:0;top:275.5px;width:877px;height:1px;background:#dfe2e6"></div>
</div>
<div class="t" style="left:100.70px;top:556.00px;font-size:15.50px;line-height:17px;color:#27313f;letter-spacing:-0.041px;-webkit-text-stroke:0.35px #27313f;">Category</div>
<div class="t" style="left:273.60px;top:556.00px;font-size:15.50px;line-height:17px;color:#27313f;letter-spacing:0.030px;-webkit-text-stroke:0.35px #27313f;">Budgeted Amount(QAR)</div>
<div class="t" style="left:493.80px;top:556.00px;font-size:15.50px;line-height:17px;color:#27313f;-webkit-text-stroke:0.35px #27313f;">Actual Amount (QAR)</div>
<div class="t" style="left:690.50px;top:556.00px;font-size:15.50px;line-height:17px;color:#27313f;letter-spacing:-0.280px;-webkit-text-stroke:0.35px #27313f;">Variance (QAR)</div>
<div class="t" style="left:834.40px;top:556.00px;font-size:15.50px;line-height:17px;color:#27313f;letter-spacing:-0.237px;-webkit-text-stroke:0.35px #27313f;">Percentage (%)</div>
<div class="t" style="left:104.50px;top:594.00px;font-size:14.00px;line-height:16px;color:#2a3546;transform:scaleX(0.9136);transform-origin:left top;">LABOUR</div>
<div class="t" style="left:427.02px;top:594.00px;font-size:14.00px;line-height:16px;color:#2a3546;">100.0 M</div>
<div class="t" style="left:634.53px;top:594.00px;font-size:14.00px;line-height:16px;color:#2a3546;">21.6 K</div>
<div class="t" style="left:750.96px;top:594.00px;font-size:14.00px;line-height:16px;color:#2a3546;">-99978400</div>
<div class="t" style="left:934.05px;top:594.00px;font-size:14.00px;line-height:16px;color:#2a3546;">6.25</div>
<div class="t" style="left:104.50px;top:635.00px;font-size:14.00px;line-height:16px;color:#2a3546;transform:scaleX(0.9119);transform-origin:left top;">MATERIAL</div>
<div class="t" style="left:427.02px;top:635.00px;font-size:14.00px;line-height:16px;color:#2a3546;">150.0 M</div>
<div class="t" style="left:632.20px;top:635.00px;font-size:14.00px;line-height:16px;color:#2a3546;">36.5 M</div>
<div class="t" style="left:744.21px;top:635.00px;font-size:14.00px;line-height:16px;color:#2a3546;">-113500000</div>
<div class="t" style="left:934.05px;top:635.00px;font-size:14.00px;line-height:16px;color:#2a3546;">9.38</div>
<div class="t" style="left:104.50px;top:675.00px;font-size:14.00px;line-height:16px;color:#2a3546;transform:scaleX(0.9204);transform-origin:left top;">EQUIPMENT</div>
<div class="t" style="left:434.80px;top:675.00px;font-size:14.00px;line-height:16px;color:#2a3546;">50.0 M</div>
<div class="t" style="left:632.20px;top:675.00px;font-size:14.00px;line-height:16px;color:#2a3546;">22.1 M</div>
<div class="t" style="left:750.96px;top:675.00px;font-size:14.00px;line-height:16px;color:#2a3546;">-27892857</div>
<div class="t" style="left:934.05px;top:675.00px;font-size:14.00px;line-height:16px;color:#2a3546;">3.13</div>
<div class="t" style="left:104.50px;top:715.00px;font-size:14.00px;line-height:16px;color:#2a3546;transform:scaleX(0.8914);transform-origin:left top;">SUBCONTRACTORS</div>
<div class="t" style="left:427.02px;top:715.00px;font-size:14.00px;line-height:16px;color:#2a3546;">250.0 M</div>
<div class="t" style="left:632.20px;top:715.00px;font-size:14.00px;line-height:16px;color:#2a3546;">54.9 M</div>
<div class="t" style="left:743.17px;top:715.00px;font-size:14.00px;line-height:16px;color:#2a3546;">-195143260</div>
<div class="t" style="left:926.27px;top:715.00px;font-size:14.00px;line-height:16px;color:#2a3546;">15.63</div>
<div class="t" style="left:104.50px;top:755.00px;font-size:14.00px;line-height:16px;color:#2a3546;transform:scaleX(0.8678);transform-origin:left top;">PERMITS</div>
<div class="t" style="left:427.02px;top:755.00px;font-size:14.00px;line-height:16px;color:#2a3546;">300.0 M</div>
<div class="t" style="left:618.96px;top:755.00px;font-size:14.00px;line-height:16px;color:#2a3546;">3300.6 K</div>
<div class="t" style="left:743.17px;top:755.00px;font-size:14.00px;line-height:16px;color:#2a3546;">-296699400</div>
<div class="t" style="left:926.27px;top:755.00px;font-size:14.00px;line-height:16px;color:#2a3546;">18.75</div>
<div class="a" style="left:94px;top:790px;width:877px;height:16.3px;overflow:hidden">
<div class="t" style="left:10.50px;top:6.00px;font-size:14.00px;line-height:16px;color:#2a3546;transform:scaleX(0.8871);transform-origin:left top;">OVERHEAD</div>
<div class="t" style="left:333.02px;top:6.00px;font-size:14.00px;line-height:16px;color:#2a3546;">150.0 M</div>
<div class="t" style="left:530.42px;top:6.00px;font-size:14.00px;line-height:16px;color:#2a3546;">100.0 M</div>
<div class="t" style="left:656.96px;top:6.00px;font-size:14.00px;line-height:16px;color:#2a3546;">-50000000</div>
<div class="t" style="left:840.05px;top:6.00px;font-size:14.00px;line-height:16px;color:#2a3546;">9.38</div>
</div>
<div class="a" style="left:971px;top:569px;width:6px;height:216px;background:#dcdcdc;"></div>
<div class="a" style="left:971px;top:569px;width:6px;height:181px;background:#5e5e5e;"></div>
<div class="a" style="left:1120.3px;top:572px;width:728.0px;height:1px;background:#e8e8e8;"></div>
<div class="t" style="left:1030.00px;top:563.00px;font-size:12.00px;line-height:14px;color:#373d3f;letter-spacing:0.206px;">300000000.00</div>
<div class="a" style="left:1120.3px;top:600px;width:728.0px;height:1px;background:#e8e8e8;"></div>
<div class="t" style="left:1030.00px;top:591.00px;font-size:12.00px;line-height:14px;color:#373d3f;letter-spacing:0.206px;">200000000.00</div>
<div class="a" style="left:1120.3px;top:628px;width:728.0px;height:1px;background:#e8e8e8;"></div>
<div class="t" style="left:1030.00px;top:619.00px;font-size:12.00px;line-height:14px;color:#373d3f;letter-spacing:0.206px;">100000000.00</div>
<div class="a" style="left:1120.3px;top:656px;width:728.0px;height:1px;background:#e8e8e8;"></div>
<div class="t" style="left:1085.65px;top:647.00px;font-size:12.00px;line-height:14px;color:#373d3f;">0.00</div>
<div class="a" style="left:1120.3px;top:683px;width:728.0px;height:1px;background:#e8e8e8;"></div>
<div class="t" style="left:1026.50px;top:675.00px;font-size:12.00px;line-height:14px;color:#373d3f;letter-spacing:0.147px;">-100000000.00</div>
<div class="a" style="left:1120.3px;top:711px;width:728.0px;height:1px;background:#e8e8e8;"></div>
<div class="t" style="left:1026.50px;top:703.00px;font-size:12.00px;line-height:14px;color:#373d3f;letter-spacing:0.147px;">-200000000.00</div>
<div class="a" style="left:1120.3px;top:739px;width:728.0px;height:1px;background:#e8e8e8;"></div>
<div class="t" style="left:1026.50px;top:731.00px;font-size:12.00px;line-height:14px;color:#373d3f;letter-spacing:0.147px;">-300000000.00</div>
<div class="a" style="left:1311px;top:572px;width:22px;height:167px;background:#f5f7fa;"></div>
<div class="a" style="left:1120.3px;top:739px;width:728.0px;height:1px;background:#d8d8d8;"></div>
<div class="a" style="left:1120px;top:739px;width:1px;height:7px;background:#d8d8d8;"></div>
<div class="a" style="left:1242px;top:739px;width:1px;height:7px;background:#d8d8d8;"></div>
<div class="a" style="left:1363px;top:739px;width:1px;height:7px;background:#d8d8d8;"></div>
<div class="a" style="left:1484px;top:739px;width:1px;height:7px;background:#d8d8d8;"></div>
<div class="a" style="left:1606px;top:739px;width:1px;height:7px;background:#d8d8d8;"></div>
<div class="a" style="left:1727px;top:739px;width:1px;height:7px;background:#d8d8d8;"></div>
<div class="a" style="left:1848px;top:739px;width:1px;height:7px;background:#d8d8d8;"></div>
<div class="a" style="left:1147.9px;top:627.5px;width:20px;height:27.9px;background:#008ffb"></div>
<div class="a" style="left:1193.1px;top:655.5px;width:20px;height:27.9px;background:#feb019"></div>
<div class="t" style="left:1160.37px;top:756.00px;font-size:12.50px;line-height:14px;color:#373d3f;letter-spacing:0.456px;">Labour</div>
<div class="a" style="left:1269.2px;top:613.6px;width:20px;height:41.9px;background:#008ffb"></div>
<div class="a" style="left:1291.8px;top:645.3px;width:20px;height:10.2px;background:#00e396"></div>
<div class="a" style="left:1314.4px;top:655.5px;width:20px;height:31.7px;background:#feb019"></div>
<div class="t" style="left:1278.60px;top:756.00px;font-size:12.50px;line-height:14px;color:#373d3f;letter-spacing:0.421px;">Material</div>
<div class="a" style="left:1390.6px;top:641.5px;width:20px;height:14.0px;background:#008ffb"></div>
<div class="a" style="left:1413.2px;top:649.3px;width:20px;height:6.2px;background:#00e396"></div>
<div class="a" style="left:1435.8px;top:655.5px;width:20px;height:7.8px;background:#feb019"></div>
<div class="t" style="left:1391.88px;top:756.00px;font-size:12.50px;line-height:14px;color:#373d3f;letter-spacing:0.468px;">Equipment</div>
<div class="a" style="left:1511.9px;top:585.6px;width:20px;height:69.9px;background:#008ffb"></div>
<div class="a" style="left:1534.5px;top:640.2px;width:20px;height:15.3px;background:#00e396"></div>
<div class="a" style="left:1557.1px;top:655.5px;width:20px;height:54.5px;background:#feb019"></div>
<div class="t" style="left:1503.02px;top:756.00px;font-size:12.50px;line-height:14px;color:#373d3f;letter-spacing:0.276px;">SubContractor</div>
<div class="a" style="left:1633.2px;top:571.6px;width:20px;height:83.8px;background:#008ffb"></div>
<div class="a" style="left:1655.8px;top:654.6px;width:20px;height:1.0px;background:#00e396"></div>
<div class="a" style="left:1678.4px;top:655.5px;width:20px;height:82.9px;background:#feb019"></div>
<div class="t" style="left:1644.25px;top:756.00px;font-size:12.50px;line-height:14px;color:#373d3f;letter-spacing:0.289px;">Permits</div>
<div class="a" style="left:1754.6px;top:613.6px;width:20px;height:41.9px;background:#008ffb"></div>
<div class="a" style="left:1777.2px;top:627.5px;width:20px;height:27.9px;background:#00e396"></div>
<div class="a" style="left:1799.8px;top:655.5px;width:20px;height:14.0px;background:#feb019"></div>
<div class="t" style="left:1759.43px;top:756.00px;font-size:12.50px;line-height:14px;color:#373d3f;letter-spacing:0.216px;">Overhead</div>
<div class="a" style="left:1210.4px;top:779.5px;width:13px;height:14px;border-radius:2px;background:#008ffb"></div>
<div class="t" style="left:1228.00px;top:778.00px;font-size:13.49px;line-height:15px;color:#373d3f;">Budgeted Amount (QAR)</div>
<div class="a" style="left:1388px;top:779.5px;width:13px;height:14px;border-radius:2px;background:#00e396"></div>
<div class="t" style="left:1404.70px;top:778.00px;font-size:13.53px;line-height:15px;color:#373d3f;">Actual Amount (QAR)</div>
<div class="a" style="left:1544.5px;top:779.5px;width:13px;height:14px;border-radius:2px;background:#feb019"></div>
<div class="t" style="left:1562.00px;top:778.00px;font-size:13.58px;line-height:15px;color:#373d3f;">Variance (QAR)</div>
<div class="a" style="left:1832.5px;top:548px;width:17px;height:2px;background:#6e8192;"></div>
<div class="a" style="left:1832.5px;top:553px;width:17px;height:2px;background:#6e8192;"></div>
<div class="a" style="left:1832.5px;top:558px;width:17px;height:2px;background:#6e8192;"></div>
<div class="a" style="left:1323px;top:661px;width:227px;height:77px;background:rgba(255,255,255,0.96);border:1px solid #e3e3e3;border-radius:5px;box-shadow:2px 2px 6px -4px #999;overflow:hidden"><div style="height:35px;background:rgba(236,239,241,0.96);border-bottom:1px solid #ddd"></div></div>
<div class="t" style="left:1330.30px;top:670.00px;font-size:14.00px;line-height:16px;color:#4a4d50;">Material</div>
<div class="a" style="left:1335.2px;top:711.2px;width:12px;height:12px;border-radius:6px;background:#feb019"></div>
<div class="t" style="left:1359.70px;top:710.00px;font-size:13.44px;line-height:15px;color:#4a4d50;">Variance (QAR):</div>
<div class="t" style="left:1467.70px;top:710.00px;font-size:13.44px;line-height:15px;color:#2a2a2a;font-weight:bold;letter-spacing:-0.044px;">-113500000</div>
<div class="t" style="left:85.50px;top:885.00px;font-size:16.50px;line-height:18px;color:#2a3546;letter-spacing:0.175px;-webkit-text-stroke:0.25px #2a3546;">Material Purchase Price Tracking</div>
<svg style="left:1786px;top:882px" width="34" height="22"><path d="M2,1.5 h15 l-5.6,7 v10 l-3.8,-3 v-7z" fill="#2b7de9"/><path d="M26,13.5 h6.5 l-3.25,3z" fill="#2b7de9"/></svg>
<svg style="left:1846px;top:881px" width="22" height="22"><circle cx="11" cy="11" r="8.8" fill="#0d6efd"/><circle cx="11" cy="6.6" r="1.5" fill="#fff"/><path d="M8.8,9.3 h3.2 v5.6 h1.4 v1.6 h-4.6 v-1.6 h1.3 v-4h-1.3z" fill="#fff"/></svg>
<div class="a" style="left:1915px;top:67px;width:5px;height:825px;background:#dedede;"></div>
<div class="a" style="left:1915px;top:67px;width:5px;height:418px;background:#6b6b6b;"></div>
<div class="a" style="left:1919px;top:1px;width:1px;height:44px;background:#dde1e6;"></div>
<div class="a" style="left:75px;top:179px;width:598px;height:280px;border:2px solid #e8111c"></div>
<div class="a" style="left:689px;top:177px;width:596px;height:285px;border:2px solid #e8111c"></div>
<svg style="left:0;top:0" width="1920" height="904"><path d="M68.2,37.6 L108.5,71.5" stroke="#ea1b25" stroke-width="2.6" stroke-linecap="round"/><path d="M118.8,80.2 L102.3,75.7 L111.6,64.7z" fill="#ea1b25"/><path d="M371.2,60.3 L397.1,40.1" stroke="#ea1b25" stroke-width="2.6" stroke-linecap="round"/><path d="M407.8,31.8 L400.0,47.0 L391.1,35.6z" fill="#ea1b25"/><path d="M499.6,45.4 L489.0,83.2" stroke="#ea1b25" stroke-width="2.6" stroke-linecap="round"/><path d="M485.3,96.2 L482.6,79.3 L496.4,83.2z" fill="#ea1b25"/><path d="M755.7,51.2 L771.4,89.2" stroke="#ea1b25" stroke-width="2.6" stroke-linecap="round"/><path d="M776.5,101.7 L763.9,90.1 L777.3,84.6z" fill="#ea1b25"/><path d="M1103.1,37.5 L1097.2,80.3" stroke="#ea1b25" stroke-width="2.6" stroke-linecap="round"/><path d="M1095.4,93.7 L1090.4,77.4 L1104.6,79.3z" fill="#ea1b25"/><path d="M1390.8,37.5 L1399.0,82.6" stroke="#ea1b25" stroke-width="2.6" stroke-linecap="round"/><path d="M1401.4,95.9 L1391.5,81.9 L1405.7,79.4z" fill="#ea1b25"/><path d="M1672.8,43.3 L1685.3,80.0" stroke="#ea1b25" stroke-width="2.6" stroke-linecap="round"/><path d="M1689.6,92.8 L1677.8,80.4 L1691.4,75.8z" fill="#ea1b25"/></svg>
<div class="a" style="left:54px;top:1px;width:30px;height:903px;background:linear-gradient(to right,rgba(20,30,40,0.17) 0px,rgba(20,30,40,0.075) 10px,rgba(20,30,40,0.033) 18px,rgba(20,30,40,0.01) 26px,rgba(20,30,40,0) 30px)"></div>
</body></html>
